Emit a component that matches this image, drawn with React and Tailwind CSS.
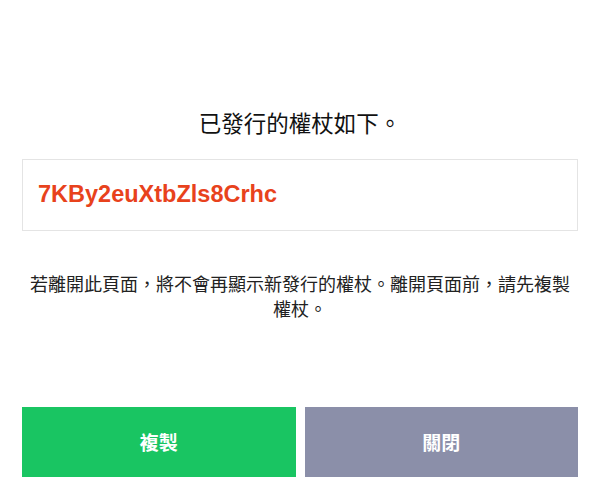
export default function App() {
  return (
    <div
      className="min-h-[499px] w-[598px] bg-white pl-[22px] pr-[20px] pt-[107px]"
      style={{ fontFamily: '"Noto Sans CJK TC", "Liberation Sans", sans-serif' }}
    >
      <h1 className="text-center text-[22.5px] leading-[30px] font-normal text-[#111111]">
        已發行的權杖如下。
      </h1>

      <div className="mt-[22px] flex h-[72px] items-center border border-[#e4e4e4] px-[15px]">
        <span className="font-['Liberation_Sans'] text-[23.5px] font-bold text-[#e8421c]">
          7KBy2euXtbZls8Crhc
        </span>
      </div>

      <p className="mt-[40px] text-center text-[18px] leading-[25px] text-[#222222]">
        若離開此頁面，將不會再顯示新發行的權杖。離開頁面前，請先複製權杖。
      </p>

      <div className="mt-[86px] grid grid-cols-2 gap-[9px]">
        <button className="h-[70px] bg-[#19c562] text-[19px] font-bold text-white">
          複製
        </button>
        <button className="h-[70px] bg-[#8b8fa9] text-[19px] font-bold text-white">
          關閉
        </button>
      </div>
    </div>
  );
}
